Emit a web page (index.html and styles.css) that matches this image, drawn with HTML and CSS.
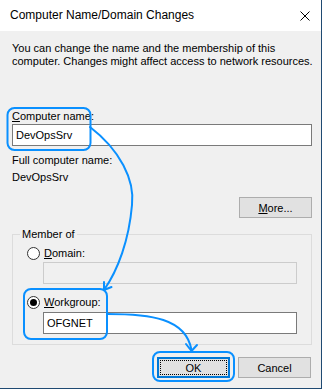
FILE: index.html
```html
<!DOCTYPE html>
<html lang="en">
<head>
    <meta charset="UTF-8">
    <title>Computer Name/Domain Changes</title>
    <link rel="stylesheet" href="styles.css">
</head>
<body>
    <div class="window">
        <div class="titlebar">
            <span class="title">Computer Name/Domain Changes</span>
            <svg class="close" width="10" height="10" viewBox="0 0 10 10">
                <path d="M0.5 0.5 L9.5 9.5 M9.5 0.5 L0.5 9.5" stroke="#000" stroke-width="1"/>
            </svg>
        </div>

        <div class="content">
            <p class="intro">You can change the name and the membership of this<br>computer. Changes might affect access to network resources.</p>

            <p class="label"><u>C</u>omputer name:</p>
            <div class="textbox">DevOpsSrv</div>

            <p class="label full-label">Full computer name:</p>
            <p class="label full-name">DevOpsSrv</p>

            <div class="more-row">
                <button class="btn"><u>M</u>ore...</button>
            </div>

            <fieldset class="member">
                <legend>Member of</legend>
                <div class="radio-row">
                    <span class="radio"></span>
                    <span><u>D</u>omain:</span>
                </div>
                <div class="textbox group-box disabled"></div>
                <div class="radio-row workgroup">
                    <span class="radio checked"></span>
                    <span><u>W</u>orkgroup:</span>
                </div>
                <div class="textbox group-box wg-box">OFGNET</div>
            </fieldset>

            <div class="buttons">
                <button class="btn default">OK</button>
                <button class="btn">Cancel</button>
            </div>
        </div>

        <!-- callouts drawn over the dialog -->
        <svg class="overlay" width="323" height="391" viewBox="0 0 323 391">
            <g fill="none" stroke="#0a90ff" stroke-width="2" stroke-linecap="round" stroke-linejoin="round">
                <rect x="7.5" y="108" width="83" height="42" rx="7"/>
                <rect x="24" y="289" width="83" height="50" rx="7"/>
                <rect x="153" y="352" width="81" height="29" rx="7"/>
                <path d="M90 127 C120 150, 135 180, 132 205 C129 240, 118 270, 104 290"/>
                <path d="M104 282 L104 290 L111.5 287"/>
                <path d="M107 314 C150 314, 186 318, 191.5 350"/>
                <path d="M186 344 L191.5 351 L197 345"/>
            </g>
        </svg>
    </div>
</body>
</html>
```

FILE: styles.css
```css
body {
    margin: 0;
    padding: 0;
    background-color: #fff;
    font-family: "Liberation Sans", Arial, sans-serif;
    font-size: 11px;
    color: #000;
}
.window {
    position: relative;
    width: 321px;
    height: 388px;
    border-right: 1px solid #1f4a72;
    border-bottom: 1px solid #1f4a72;
    background-color: #f0f0f0;
}
.titlebar {
    height: 31px;
    background-color: #fff;
    display: flex;
    align-items: center;
    justify-content: space-between;
    padding: 0 11px 0 10px;
}
.title {
    font-size: 12px;
    line-height: 15px;
}
.close {
    display: block;
}
.content {
    padding: 10px 10px 0 12px;
}
p {
    margin: 0;
}
.intro {
    line-height: 13px;
    margin-top: 1px;
    white-space: nowrap;
}
.label {
    line-height: 15px;
    margin-top: 41px;
}
.textbox {
    box-sizing: border-box;
    height: 22px;
    width: 300px;
    border: 1px solid #7a7a7a;
    background-color: #fff;
    padding: 0 3px;
    line-height: 20px;
}
.full-label {
    margin-top: 7px;
}
.full-name {
    margin-top: 2px;
}
.more-row {
    display: flex;
    justify-content: flex-end;
    width: 300px;
    margin-top: 12px;
}
.btn {
    box-sizing: border-box;
    width: 73px;
    height: 21px;
    padding: 0;
    border: 1px solid #adadad;
    background-color: #e1e1e1;
    font-family: "Liberation Sans", Arial, sans-serif;
    font-size: 11px;
    color: #000;
}
.btn.default {
    border-color: #0078d7;
    box-shadow: inset 0 0 0 1px #0078d7;
    outline: 1px dotted #000;
    outline-offset: -4px;
}
.member {
    box-sizing: border-box;
    width: 300px;
    margin: 9px 0 0 0;
    padding: 4px 0 10px 14px;
    border: 1px solid #dcdcdc;
}
.member legend {
    padding: 0 2px;
    margin-left: -7px;
    line-height: 15px;
}
.radio-row {
    display: flex;
    align-items: center;
    gap: 4px;
    line-height: 15px;
}
.radio {
    box-sizing: border-box;
    width: 13px;
    height: 13px;
    border: 1px solid #333;
    border-radius: 50%;
    background-color: #fff;
    display: flex;
    align-items: center;
    justify-content: center;
}
.radio.checked::before {
    content: "";
    width: 7px;
    height: 7px;
    border-radius: 50%;
    background-color: #000;
}
.group-box {
    width: 254px;
    margin-left: 16px;
    margin-top: 1px;
}
.textbox.disabled {
    background-color: #f0f0f0;
    border-color: #cccccc;
}
.workgroup {
    margin-top: 11px;
}
.wg-box {
    margin-top: 2px;
}
.buttons {
    display: flex;
    justify-content: flex-end;
    gap: 8px;
    width: 299px;
    margin-top: 12px;
}
.overlay {
    position: absolute;
    left: 0;
    top: 0;
    pointer-events: none;
}
```
